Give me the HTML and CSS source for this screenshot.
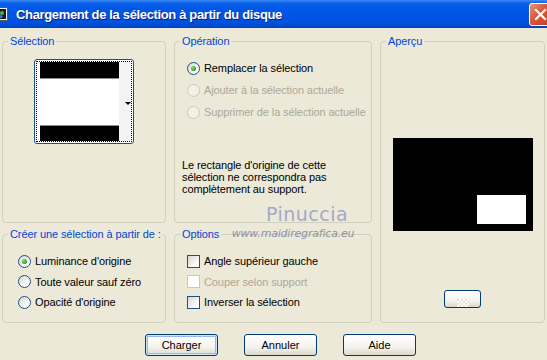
FILE: index.html
```html
<!DOCTYPE html>
<html lang="fr">
<head>
    <meta charset="UTF-8">
    <meta name="viewport" content="width=device-width, initial-scale=1.0">
    <title>Chargement de la sélection à partir du disque</title>
    <link rel="stylesheet" href="styles.css">
</head>
<body>
    <!-- Title bar -->
    <div class="titlebar">
        <svg class="app-icon" width="16" height="16" viewBox="0 0 16 16">
            <rect x="0.5" y="1.5" width="15" height="13" fill="#f4f4f4" stroke="#5a5a5a"/>
            <rect x="2" y="3" width="12" height="10" fill="#1b1b1b"/>
            <circle cx="6" cy="8" r="2.5" fill="#c03fc8"/>
            <circle cx="10" cy="7" r="2" fill="#2dbb4a"/>
            <circle cx="9" cy="10.5" r="1.6" fill="#2f7be0"/>
        </svg>
        <span class="title">Chargement de la sélection à partir du disque</span>
        <span class="close">
            <svg width="13" height="13" viewBox="0 0 13 13">
                <path d="M2 2 L11 11 M11 2 L2 11" stroke="#fff" stroke-width="2.2" stroke-linecap="square"/>
            </svg>
        </span>
    </div>

    <div class="dialog">
        <div class="groups">
            <!-- Sélection -->
            <fieldset class="group">
                <legend>Sélection</legend>
                <div class="sel-body">
                    <div class="thumb">
                        <div class="thumb-focus">
                            <div class="thumb-image">
                                <div class="bar bar-top"></div>
                                <div class="bar bar-bottom"></div>
                            </div>
                            <div class="thumb-side"><span class="arrow"></span></div>
                        </div>
                    </div>
                </div>
            </fieldset>

            <!-- Opération -->
            <fieldset class="group">
                <legend>Opération</legend>
                <div class="op-body">
                    <div class="option"><span class="radio on"></span>Remplacer la sélection</div>
                    <div class="option disabled"><span class="radio"></span>Ajouter à la sélection actuelle</div>
                    <div class="option disabled"><span class="radio"></span>Supprimer de la sélection actuelle</div>
                    <p class="note">Le rectangle d'origine de cette<br>sélection ne correspondra pas<br>complètement au support.</p>
                </div>
            </fieldset>

            <!-- Aperçu -->
            <fieldset class="group preview-group">
                <legend>Aperçu</legend>
                <div class="preview-body">
                    <div class="preview">
                        <div class="preview-sel"></div>
                    </div>
                    <button class="btn small-btn" type="button"><span class="checker"></span></button>
                </div>
            </fieldset>

            <!-- Créer une sélection -->
            <fieldset class="group">
                <legend>Créer une sélection à partir de :</legend>
                <div class="list-body src-body">
                    <div class="option row"><span class="radio on"></span>Luminance d'origine</div>
                    <div class="option row"><span class="radio"></span>Toute valeur sauf zéro</div>
                    <div class="option row"><span class="radio"></span>Opacité d'origine</div>
                </div>
            </fieldset>

            <!-- Options -->
            <fieldset class="group">
                <legend>Options</legend>
                <div class="list-body opt-body">
                    <div class="option row"><span class="check"></span>Angle supérieur gauche</div>
                    <div class="option row disabled"><span class="check"></span>Couper selon support</div>
                    <div class="option row"><span class="check"></span>Inverser la sélection</div>
                </div>
            </fieldset>
        </div>

        <div class="actions">
            <button class="btn default" type="button">Charger</button>
            <button class="btn" type="button">Annuler</button>
            <button class="btn" type="button">Aide</button>
        </div>

        <!-- watermark over the dialog -->
        <div class="watermark">
            <span class="wm-name">Pinuccia</span>
            <span class="wm-site">www.maidiregrafica.eu</span>
        </div>
    </div>
</body>
</html>
```

FILE: styles.css
```css
body {
    margin: 0;
    width: 547px;
    height: 360px;
    overflow: hidden;
    background-color: #ECE9D8;
    font-family: 'Liberation Sans', Arial, sans-serif;
    font-size: 11px;
    letter-spacing: -0.1px;
    color: #000000;
}
.titlebar {
    height: 28px;
    display: flex;
    align-items: center;
    overflow: hidden;
    background: linear-gradient(#3d8cf5 0, #0a61e6 3px, #0058e6 8px, #0054e3 60%, #004fd8 90%, #0043b8 100%);
}
.app-icon {
    margin-left: -8px;
    flex: none;
}
.title {
    margin-left: 8px;
    flex: 1;
    color: #FFFFFF;
    font-size: 13px;
    font-weight: bold;
    letter-spacing: -0.35px;
    text-shadow: 1px 1px 0 #0a1e80;
}
.close {
    width: 21px;
    height: 21px;
    margin-right: -5px;
    border: 1px solid #FFFFFF;
    border-radius: 3px;
    background: linear-gradient(135deg, #e8937a, #d8553a 45%, #c2411f);
    display: flex;
    align-items: center;
    justify-content: center;
}
.dialog {
    position: relative;
    padding: 7px 0 0 2px;
}
.groups {
    display: grid;
    grid-template-columns: 164px 198px 165px;
    grid-template-rows: 188px 95px;
    column-gap: 8px;
    row-gap: 5px;
}
.group {
    margin: 0;
    padding: 0;
    min-width: 0;
    border: 1px solid #D0D0BF;
    border-radius: 4px;
}
.group legend {
    margin-left: 5px;
    padding: 0 2px;
    line-height: 13px;
    white-space: nowrap;
    color: #0046D5;
}
.preview-group {
    grid-row: 1 / 3;
    grid-column: 3;
}

/* Sélection */
.sel-body {
    display: flex;
    justify-content: center;
    padding-top: 11px;
}
.thumb {
    width: 100px;
    height: 85px;
    box-sizing: border-box;
    border: 1px solid #1C5180;
    border-radius: 3px;
    background-color: #FFFFFF;
    padding: 1px;
}
.thumb-focus {
    height: 100%;
    box-sizing: border-box;
    border: 1px dotted #000000;
    display: flex;
    padding-left: 3px;
}
.thumb-image {
    width: 79px;
    display: flex;
    flex-direction: column;
    justify-content: space-between;
}
.bar {
    height: 16px;
    background-color: #000000;
}
.bar-top {
    border-bottom: 1px solid #8c8c8c;
}
.bar-bottom {
    height: 15px;
    border-top: 1px solid #8c8c8c;
}
.thumb-side {
    flex: 1;
    background-color: #F3F3F3;
    display: flex;
    align-items: center;
    justify-content: flex-end;
}
.arrow {
    width: 0;
    height: 0;
    margin-top: 3px;
    border-left: 3px solid transparent;
    border-right: 3px solid transparent;
    border-top: 3px solid #000000;
}

/* options, radios, checks */
.option {
    height: 22px;
    display: flex;
    align-items: center;
    gap: 4px;
    white-space: nowrap;
}
.option.disabled {
    color: #ACA899;
}
.row {
    height: 20.5px;
}
.radio {
    width: 13px;
    height: 13px;
    box-sizing: border-box;
    border-radius: 50%;
    border: 1px solid #1C5180;
    background: linear-gradient(135deg, #D8D6CC, #FFFFFF 80%);
    position: relative;
    flex: none;
}
.radio.on::after {
    content: '';
    position: absolute;
    left: 3px;
    top: 3px;
    width: 5px;
    height: 5px;
    border-radius: 50%;
    background: radial-gradient(circle at 35% 35%, #7de27d, #21A121 70%);
}
.disabled .radio {
    border-color: #CAC8BB;
    background: #F3F1E6;
}
.check {
    width: 13px;
    height: 13px;
    box-sizing: border-box;
    border: 1px solid #1C5180;
    background: linear-gradient(135deg, #D8D6CC, #FFFFFF 80%);
    flex: none;
}
.disabled .check {
    border-color: #CAC8BB;
    background: #FFFFFF;
}

/* Opération */
.op-body {
    padding: 9px 0 0 12px;
}
.note {
    margin: 36px 0 0 -5px;
    line-height: 12px;
}

/* lower groups */
.list-body {
    padding-top: 10px;
}
.src-body {
    padding-left: 15px;
}
.opt-body {
    padding-left: 12px;
}

/* Aperçu */
.preview-body {
    display: flex;
    flex-direction: column;
    align-items: center;
    padding-top: 90px;
}
.preview {
    width: 140px;
    height: 93px;
    background-color: #000000;
    display: flex;
    justify-content: flex-end;
    align-items: flex-end;
}
.preview-sel {
    width: 49px;
    height: 29px;
    margin: 0 7px 7px 0;
    background-color: #FFFFFF;
}
.btn.small-btn {
    margin-top: 59px;
    width: 37px;
    height: 18px;
    display: flex;
    align-items: flex-end;
    justify-content: center;
}
.checker {
    width: 12px;
    height: 8px;
    background: repeating-conic-gradient(#FFFFFF 0 25%, #E4E2DA 0 50%) 0 0 / 4px 4px;
}

/* buttons */
.btn {
    width: 73px;
    height: 22px;
    padding: 0;
    border: 1px solid #003C74;
    border-radius: 3px;
    background: linear-gradient(#FFFFFF, #F4F3EE 60%, #DCD8CB);
    font-family: 'Liberation Sans', Arial, sans-serif;
    font-size: 11px;
    color: #000000;
}
.btn.default {
    box-shadow: inset 0 0 0 1px #CEE7FF, inset 0 0 0 2px #98B8EA;
}
.actions {
    display: flex;
    justify-content: center;
    gap: 26px;
    padding: 11px 0 0 12px;
}

/* watermark */
.watermark {
    position: absolute;
    left: 232px;
    top: 176px;
    width: 122px;
    display: flex;
    flex-direction: column;
    align-items: center;
    gap: 3px;
    pointer-events: none;
}
.wm-name {
    font-family: 'DejaVu Sans', sans-serif;
    font-size: 19px;
    line-height: 21px;
    letter-spacing: 0.5px;
    color: #A3A9C6;
    padding-left: 28px;
}
.wm-site {
    font-family: 'DejaVu Sans', sans-serif;
    font-size: 11px;
    line-height: 12px;
    font-style: italic;
    letter-spacing: -0.2px;
    color: #8d93a8;
}
```
